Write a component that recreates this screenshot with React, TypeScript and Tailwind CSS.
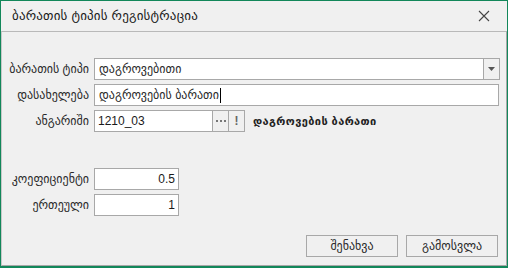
import React from "react";

const font = { fontFamily: '"Liberation Sans", "DejaVu Sans", sans-serif' };

function Label({ children }: { children: React.ReactNode }) {
  return (
    <div className="w-[87px] shrink-0 text-right text-[12px] text-[#2a2a2a] leading-none">
      {children}
    </div>
  );
}

export default function App() {
  return (
    <div
      className="w-[508px] h-[268px] bg-[#f0f0f0] border-t border-l border-r border-b-2 border-[#12875a] flex flex-col text-[#1a1a1a]"
      style={font}
    >
      <div className="h-[30px] shrink-0 flex items-center pl-[11px] pr-[17px]">
        <span className="text-[13px] text-[#1a1a1a] tracking-[0.2px]">
          ბარათის ტიპის რეგისტრაცია
        </span>
        <div className="ml-auto">
          <svg width="12" height="12" viewBox="0 0 12 12">
            <path d="M1 1 L11 11 M11 1 L1 11" stroke="#444" strokeWidth="1.1" fill="none" />
          </svg>
        </div>
      </div>
      <div className="flex-1 border border-t-[#b9b9b9] border-l-[#c8c8c8] border-r-[#a8a8a8] border-b-[#a8a8a8] flex flex-col pt-[26px] pb-[8px]">
        <div className="flex items-center h-[22px]">
          <Label>ბარათის ტიპი</Label>
          <div className="ml-[5px] w-[406px] h-[22px] flex border border-[#a8a8a8] bg-white">
            <div className="flex-1 flex items-center pl-[4px] text-[12px] text-[#2a2a2a]">დაგროვებითი</div>
            <div className="w-[16px] border-l border-[#a8a8a8] bg-[#f0f0f0] flex items-center justify-center">
              <svg width="7" height="4" viewBox="0 0 7 4">
                <path d="M0 0 H7 L3.5 4 Z" fill="#555" />
              </svg>
            </div>
          </div>
        </div>
        <div className="flex items-center h-[22px] mt-[4px]">
          <Label>დასახელება</Label>
          <div className="ml-[5px] w-[405px] h-[22px] flex items-center border border-[#a8a8a8] bg-white pl-[4px] text-[12px] text-[#2a2a2a]">
            <span>დაგროვების ბარათი</span>
            <span className="ml-[1px] w-[1px] h-[15px] bg-black" />
          </div>
        </div>
        <div className="flex items-center h-[22px] mt-[4px]">
          <Label>ანგარიში</Label>
          <div className="ml-[5px] h-[22px] flex border border-[#a8a8a8] bg-white">
            <div className="w-[117px] flex items-center pl-[3px] text-[12px]">1210_03</div>
            <div className="w-[16px] border-l border-[#a8a8a8] bg-[#f0f0f0] flex items-center justify-center">
              <svg width="10" height="3" viewBox="0 0 10 3">
                <rect x="0" y="0" width="2" height="2" fill="#777" />
                <rect x="4" y="0" width="2" height="2" fill="#777" />
                <rect x="8" y="0" width="2" height="2" fill="#777" />
              </svg>
            </div>
            <div className="w-[16px] border-l border-[#a8a8a8] bg-[#f0f0f0] flex items-center justify-center text-[#666] text-[12px] font-bold leading-none">
              !
            </div>
          </div>
          <div className="ml-[8px] text-[11px] font-bold text-[#222] tracking-[0.4px]">
            დაგროვების ბარათი
          </div>
        </div>
        <div className="flex items-center h-[22px] mt-[36px]">
          <Label>კოეფიციენტი</Label>
          <div className="ml-[5px] w-[85px] h-[22px] flex items-center justify-end border border-[#a8a8a8] bg-white pr-[3px] text-[12px]">
            0.5
          </div>
        </div>
        <div className="flex items-center h-[22px] mt-[4px]">
          <Label>ერთეული</Label>
          <div className="ml-[5px] w-[85px] h-[22px] flex items-center justify-end border border-[#a8a8a8] bg-white pr-[3px] text-[12px]">
            1
          </div>
        </div>
        <div className="mt-auto flex justify-end gap-[8px] pr-[8px]">
          <div className="w-[92px] h-[22px] border border-[#a8a8a8] bg-[#f0f0f0] flex items-center justify-center text-[12px] text-[#2a2a2a]">
            შენახვა
          </div>
          <div className="w-[92px] h-[22px] border border-[#a8a8a8] bg-[#f0f0f0] flex items-center justify-center text-[12px] text-[#2a2a2a]">
            გამოსვლა
          </div>
        </div>
      </div>
    </div>
  );
}
